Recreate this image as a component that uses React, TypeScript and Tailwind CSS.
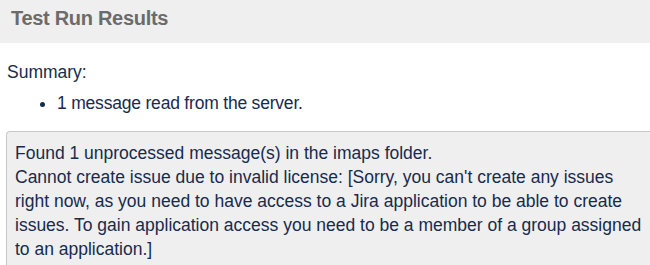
export default function App() {
  return (
    <div
      className="w-[650px] h-[265px] overflow-hidden bg-white text-[#172b4d]"
      style={{ fontFamily: '"Liberation Sans", Arial, sans-serif' }}
    >
      {/* Header */}
      <div className="h-[43px] bg-[#efefef] pl-[11px] pt-[6px]">
        <h2 className="text-[20px] leading-[24px] font-bold text-[#6b6b6b] tracking-[-0.3px]">
          Test Run Results
        </h2>
      </div>

      <div className="pl-[7px] pt-[17px] text-[17.5px] leading-[24px]">
        <p>Summary:</p>
        <ul className="mt-[7px] pl-[50px] list-disc">
          <li className="tracking-[-0.2px]">1 message read from the server.</li>
        </ul>
      </div>

      {/* Message box */}
      <div className="mt-[16px] ml-[6px] border-t border-l border-[#c8c8c8] rounded-tl-[4px] bg-[#efefef] pl-[8px] pt-[9px] pb-[10px] text-[17.5px] leading-[24px] whitespace-nowrap">
        <p>Found 1 unprocessed message(s) in the imaps folder.</p>
        <p>
          Cannot create issue due to invalid license: [Sorry, you can't create any issues
          <br />
          right now, as you need to have access to a Jira application to be able to create
          <br />
          issues. To gain application access you need to be a member of a group assigned
          <br />
          to an application.]
        </p>
      </div>
    </div>
  )
}
